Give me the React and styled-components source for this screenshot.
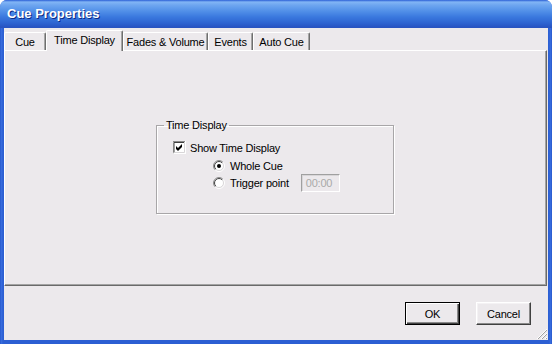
import { useId } from "react";
import styled, { createGlobalStyle } from "styled-components";

const BG = "#ECE9EC";

const GlobalStyle = createGlobalStyle`
  html, body { margin: 0; padding: 0; background: #fff; }
  body { font-family: "Liberation Sans", Arial, sans-serif; font-size: 11px; color: #000; }
`;

const Window = styled.div`
  width: 552px;
  height: 344px;
  box-sizing: border-box;
  display: flex;
  flex-direction: column;
  background: linear-gradient(90deg, #1f4fc4 0, #3a6fe0 1px, #2c5fd3 3px, #2c5fd3 calc(100% - 3px), #3a6fe0 calc(100% - 1px), #1f4fc4 100%);
  border-radius: 7px 7px 0 0;
  overflow: hidden;
`;

const TitleBar = styled.div`
  height: 28px;
  flex: none;
  display: flex;
  align-items: center;
  padding-left: 7px;
  padding-bottom: 1px;
  box-sizing: border-box;
  background: linear-gradient(180deg, #2b5fd6 0, #82b5f5 2px, #6ea6f0 5px, #5290e8 11px, #3a78de 17px, #2e64d1 23px, #2854c3 27px, #2a54bd 28px);
  color: #fff;
  font-family: "Liberation Sans", Arial, sans-serif;
  font-weight: bold;
  font-size: 13px;
  text-shadow: 1px 1px #0c2a86;
`;

const Body = styled.div`
  flex: 1;
  margin: 0 4px 4px;
  background: ${BG};
  display: flex;
  flex-direction: column;
  position: relative;
`;

const TabStrip = styled.div`
  height: 22px;
  flex: none;
  display: flex;
  align-items: flex-end;
`;

const Tab = styled.div`
  box-sizing: border-box;
  width: ${(p) => p.$w}px;
  height: ${(p) => (p.$active ? 21 : 18)}px;
  margin-bottom: ${(p) => (p.$active ? -1 : 0)}px;
  padding-bottom: ${(p) => (p.$active ? 3 : 0)}px;
  position: relative;
  z-index: ${(p) => (p.$active ? 1 : 0)};
  display: flex;
  align-items: center;
  justify-content: center;
  background: ${BG};
  border-top: 1px solid #fff;
  border-left: 1px solid #fff;
  border-right: 1px solid #6e6e6e;
  box-shadow: inset -1px 0 #a5a5a5;
  border-radius: 2px 2px 0 0;
  letter-spacing: -0.2px;
  white-space: nowrap;
`;

const Panel = styled.div`
  height: 236px;
  flex: none;
  box-sizing: border-box;
  margin-right: 1px;
  border-top: 1px solid #fff;
  border-left: 1px solid #fff;
  border-right: 1px solid #6a6a6a;
  border-bottom: 1px solid #6a6a6a;
  box-shadow: inset -1px -1px #a3a3a3;
  padding: 68px 0 0 151px;
`;

const GroupBox = styled.fieldset`
  box-sizing: border-box;
  width: 238px;
  height: 95px;
  margin: 0;
  padding: 7px 0 0 0;
  border: 1px solid #a8a6a8;
  box-shadow: 1px 1px #fff, inset 1px 1px #fff;
  min-inline-size: 0;
`;

const Legend = styled.legend`
  margin-left: 7px;
  padding: 0 2px;
  line-height: 13px;
  letter-spacing: -0.2px;
`;

const Row = styled.div`
  height: 17px;
  display: flex;
  align-items: center;
  padding-left: ${(p) => p.$indent}px;
  margin-bottom: ${(p) => p.$gap || 0}px;
  letter-spacing: -0.2px;
  white-space: nowrap;
`;

const Label = styled.span`
  margin-left: ${(p) => p.$gap}px;
`;

const TimeField = styled.div`
  box-sizing: border-box;
  width: 39px;
  height: 18px;
  margin-left: 12px;
  padding-left: 4px;
  display: flex;
  align-items: center;
  border: 1px solid;
  border-color: #a0a0a0 #fff #fff #a0a0a0;
  box-shadow: inset 1px 1px #d8d6d8;
  color: #a9a9a9;
  background: ${BG};
`;

const Footer = styled.div`
  flex: 1;
  display: flex;
  justify-content: flex-end;
  align-items: flex-start;
  gap: 16px;
  padding: 16px 17px 0 0;
`;

const Button = styled.button`
  box-sizing: border-box;
  width: 55px;
  height: 23px;
  padding: 0;
  background: ${BG};
  font-family: "Liberation Sans", Arial, sans-serif;
  font-size: 11px;
  color: #000;
  letter-spacing: -0.2px;
  border: 1px solid;
  border-color: ${(p) => (p.$default ? "#000" : "#fff #404040 #404040 #fff")};
  box-shadow: ${(p) =>
    p.$default
      ? "inset 1px 1px #fff, inset -1px -1px #404040, inset -2px -2px #8a8a8a"
      : "inset -1px -1px #8a8a8a, inset 1px 1px #f4f2f4"};
`;

const Grip = styled.svg`
  position: absolute;
  right: 0;
  bottom: 0;
`;

const CheckBox = () => (
  <svg width="13" height="13" viewBox="0 0 13 13">
    <rect x="0" y="0" width="13" height="13" fill="#fff" />
    <path d="M0 12.5V0.5H12.5" stroke="#8a8a8a" fill="none" />
    <path d="M1 11.5V1.5H11.5" stroke="#404040" fill="none" />
    <path d="M1 12.5H12.5V0" stroke="#fff" fill="none" />
    <path d="M2 11.5H11.5V1" stroke="#d8d6d8" fill="none" />
    <path d="M3 5L5 7L9 3L9 6L5 10L3 8Z" fill="#000" />
  </svg>
);

const Radio = ({ checked }) => {
  const id = useId().replace(/:/g, "");
  return (
    <svg width="12" height="12" viewBox="0 0 12 12">
      <defs>
        <linearGradient id={`o${id}`} x1="0" y1="0" x2="1" y2="1">
          <stop offset="0.45" stopColor="#8a8a8a" />
          <stop offset="0.55" stopColor="#ffffff" />
        </linearGradient>
        <linearGradient id={`i${id}`} x1="0" y1="0" x2="1" y2="1">
          <stop offset="0.45" stopColor="#404040" />
          <stop offset="0.55" stopColor="#d8d6d8" />
        </linearGradient>
      </defs>
      <circle cx="6" cy="6" r="5.5" fill="none" stroke={`url(#o${id})`} />
      <circle cx="6" cy="6" r="4.5" fill="#fff" stroke={`url(#i${id})`} />
      {checked && <circle cx="6" cy="6" r="2" fill="#000" />}
    </svg>
  );
};

const tabs = [
  { label: "Cue", w: 42 },
  { label: "Time Display", w: 77, active: true },
  { label: "Fades & Volume", w: 85 },
  { label: "Events", w: 45 },
  { label: "Auto Cue", w: 57 },
];

const App = () => {
  return (
    <>
      <GlobalStyle />
      <Window>
        <TitleBar>Cue Properties</TitleBar>
        <Body>
          <TabStrip>
            {tabs.map((t) => (
              <Tab key={t.label} $w={t.w} $active={t.active}>
                {t.label}
              </Tab>
            ))}
          </TabStrip>
          <Panel>
            <GroupBox>
              <Legend>Time Display</Legend>
              <Row $indent={16} $gap={1}>
                <CheckBox />
                <Label $gap={4}>Show Time Display</Label>
              </Row>
              <Row $indent={56}>
                <Radio checked />
                <Label $gap={5}>Whole Cue</Label>
              </Row>
              <Row $indent={56}>
                <Radio />
                <Label $gap={5}>Trigger point</Label>
                <TimeField>00:00</TimeField>
              </Row>
            </GroupBox>
          </Panel>
          <Footer>
            <Button $default>OK</Button>
            <Button>Cancel</Button>
          </Footer>
          <Grip width="12" height="12" viewBox="0 0 12 12">
            <path d="M11 1L1 11M11 5L5 11M11 9L9 11" stroke="#fff" />
            <path d="M11 2L2 11M11 6L6 11M11 10L10 11" stroke="#a0a0a0" />
          </Grip>
        </Body>
      </Window>
    </>
  );
};

export default App;
